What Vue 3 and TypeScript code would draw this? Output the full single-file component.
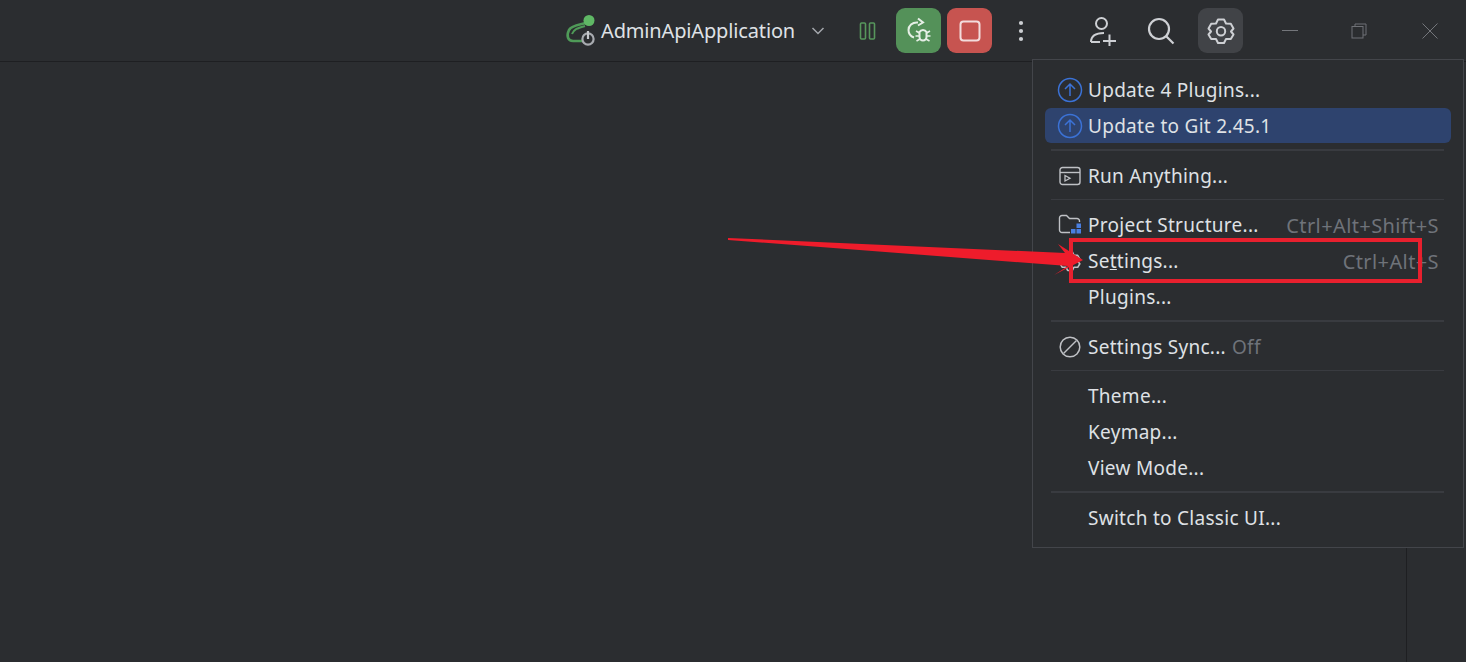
<script setup lang="ts">
interface Row { kind: 'item' | 'sep'; label?: string; icon?: string; hint?: string; suffix?: string; active?: boolean; strong?: boolean; tight?: boolean }
const rows: Row[] = [
  { kind: 'item', label: 'Update 4 Plugins...', icon: 'up' },
  { kind: 'item', label: 'Update to Git 2.45.1', icon: 'up', active: true },
  { kind: 'sep', strong: true },
  { kind: 'item', label: 'Run Anything...', icon: 'run' },
  { kind: 'sep', tight: true },
  { kind: 'item', label: 'Project Structure...', icon: 'folder', hint: 'Ctrl+Alt+Shift+S' },
  { kind: 'item', label: 'settings', icon: 'gear', hint: 'Ctrl+Alt+S' },
  { kind: 'item', label: 'Plugins...' },
  { kind: 'sep', strong: true },
  { kind: 'item', label: 'Settings Sync...', icon: 'off', suffix: 'Off' },
  { kind: 'sep', tight: true },
  { kind: 'item', label: 'Theme...' },
  { kind: 'item', label: 'Keymap...' },
  { kind: 'item', label: 'View Mode...' },
  { kind: 'sep', strong: true },
  { kind: 'item', label: 'Switch to Classic UI...' },
]
</script>

<template>
  <div class="ide">
    <header class="bar">
      <svg class="spring" width="32" height="32" viewBox="0 0 32 32" fill="none">
        <path d="M21 8 C14 10 7 10 4 15 C1 21 3 26 8 26 L17 26" stroke="#4f9a58" stroke-width="2.6" />
        <path d="M20 11 C13 13 9 14 7 19" stroke="#4f9a58" stroke-width="2" />
        <circle cx="24" cy="5.500" r="5.500" fill="#5fb865" />
        <circle cx="23" cy="24" r="5.600" stroke="#a8abb0" stroke-width="2.200" />
        <path d="M23 16 V24" stroke="#c5c7cc" stroke-width="2.200" />
      </svg>
      <span class="run-name">AdminApiApplication</span>
      <svg class="chev" width="14" height="10" viewBox="0 0 14 10" fill="none">
        <path d="M1.500 2 L7 7.500 L12.500 2" stroke="#a4a7ac" stroke-width="1.500" />
      </svg>
      <svg class="pause" width="18" height="18" viewBox="0 0 18 18" fill="none">
        <rect x="1.500" y="1" width="5" height="16" rx="1" stroke="#57965c" stroke-width="1.600" />
        <rect x="10.500" y="1" width="5" height="16" rx="1" stroke="#57965c" stroke-width="1.600" />
      </svg>
      <div class="btn green">
        <svg width="28" height="28" viewBox="0 0 28 28" fill="none">
          <path d="M13 5.500 C7 5 3.500 9 3.500 13 C3.500 17 6 19.500 9 20.500" stroke="#e6efe6" stroke-width="2" />
          <path d="M13 1.500 L18 5.500 L13 8.500" stroke="#e6efe6" stroke-width="2" />
          <path d="M14.500 15 a4 4 0 0 1 7 0 v5 a3.500 3.500 0 0 1 -7 0 z" stroke="#e6efe6" stroke-width="2" />
          <path d="M11 14 L14.500 16 M25 14 L21.500 16 M10.500 19 H14.500 M25.500 19 H21.500 M11.500 24 L15 22 M24.500 24 L21 22" stroke="#e6efe6" stroke-width="1.600" />
        </svg>
      </div>
      <div class="btn red">
        <svg width="24" height="24" viewBox="0 0 24 24" fill="none">
          <rect x="2.500" y="2.500" width="19" height="19" rx="3" stroke="#f3dcdc" stroke-width="2" />
        </svg>
      </div>
      <svg class="dots" width="6" height="22" viewBox="0 0 6 22">
        <circle cx="3" cy="3" r="2.100" fill="#ccced2" />
        <circle cx="3" cy="11" r="2.100" fill="#ccced2" />
        <circle cx="3" cy="19" r="2.100" fill="#ccced2" />
      </svg>
      <svg class="adduser" width="28" height="30" viewBox="0 0 28 30" fill="none">
        <circle cx="12.500" cy="7.500" r="5.500" stroke="#ced0d4" stroke-width="2" />
        <path d="M2 26 C2 20 7 17 15 17 M2 26 H11" stroke="#ced0d4" stroke-width="2" />
        <path d="M14 25 H27 M20.500 18.500 V30" stroke="#ced0d4" stroke-width="2" />
      </svg>
      <svg class="search" width="28" height="28" viewBox="0 0 28 28" fill="none">
        <circle cx="12" cy="12" r="10" stroke="#ced0d4" stroke-width="2.200" />
        <path d="M19 19 L26.500 26.500" stroke="#ced0d4" stroke-width="2.200" />
      </svg>
      <div class="btn gearbox">
        <svg width="28" height="28" viewBox="0 0 28 28" fill="none">
          <path d="M11 2.500 H17 L19 6.500 L23.800 6.800 L26.500 11.500 L24 14.500 L26.500 17.500 L23.800 22 L19 22 L17 26 H11 L9 22 L4.200 22 L1.500 17.500 L4 14.500 L1.500 11.500 L4.200 6.800 L9 6.500 Z" stroke="#ced0d4" stroke-width="2" stroke-linejoin="round" />
          <circle cx="14" cy="14.300" r="4.200" stroke="#ced0d4" stroke-width="2" />
        </svg>
      </div>
      <div class="win">
        <svg class="w-min" width="16" height="2" viewBox="0 0 16 2"><rect width="16" height="1" fill="#74767b" /></svg>
        <svg class="w-max" width="16" height="16" viewBox="0 0 16 16" fill="none">
          <rect x="1" y="3.500" width="11" height="11.500" stroke="#6f7176" />
          <path d="M4 3.500 V1 H15 V12 H12" stroke="#6f7176" />
        </svg>
        <svg class="w-close" width="16" height="16" viewBox="0 0 16 16" fill="none">
          <path d="M0.500 0.500 L15.500 15.500 M15.500 0.500 L0.500 15.500" stroke="#74767b" />
        </svg>
      </div>
    </header>
    <main class="body">
      <div class="editor"></div>
      <aside class="strip"></aside>
    </main>

    <div class="menu">
      <template v-for="(row, i) in rows" :key="i">
        <div v-if="row.kind === 'sep'" class="sep" :class="{ strong: row.strong, tight: row.tight }"></div>
        <div v-else class="row" :class="{ active: row.active }">
          <span class="ico">
            <svg v-if="row.icon === 'up'" width="26" height="26" viewBox="0 0 26 26" fill="none">
              <circle cx="13" cy="13" r="11.500" stroke="#3b72d6" stroke-width="1.500" />
              <path d="M13 19 V7.500 M8 12 L13 7 L18 12" stroke="#3b72d6" stroke-width="1.500" />
            </svg>
            <svg v-else-if="row.icon === 'run'" width="22" height="20" viewBox="0 0 22 20" fill="none">
              <rect x="1" y="1.500" width="20" height="17" rx="2.500" stroke="#bfc1c5" stroke-width="1.400" />
              <path d="M1 6.500 H21" stroke="#bfc1c5" stroke-width="1.400" />
              <path d="M6 9.500 L11 12.200 L6 15 Z" stroke="#bfc1c5" stroke-width="1.300" />
            </svg>
            <svg v-else-if="row.icon === 'folder'" width="24" height="22" viewBox="0 0 24 22" fill="none">
              <path d="M12 18.500 H4 A2.500 2.500 0 0 1 1.500 16 V4 A2.500 2.500 0 0 1 4 1.500 H8.500 L11.500 4.500 H19 A2.500 2.500 0 0 1 21.500 7 V8" stroke="#bfc1c5" stroke-width="1.400" />
              <rect x="13" y="15" width="4.500" height="4.500" fill="#4a7fe0" />
              <rect x="18.500" y="15" width="4.500" height="4.500" fill="#4a7fe0" />
              <rect x="18.500" y="9.500" width="4.500" height="4.500" fill="#4a7fe0" />
            </svg>
            <svg v-else-if="row.icon === 'gear'" width="22" height="22" viewBox="0 0 28 28" fill="none">
              <path d="M11 2.500 H17 L19 6.500 L23.800 6.800 L26.500 11.500 L24 14.500 L26.500 17.500 L23.800 22 L19 22 L17 26 H11 L9 22 L4.200 22 L1.500 17.500 L4 14.500 L1.500 11.500 L4.200 6.800 L9 6.500 Z" stroke="#bfc1c5" stroke-width="2" stroke-linejoin="round" />
            </svg>
            <svg v-else-if="row.icon === 'off'" width="22" height="22" viewBox="0 0 22 22" fill="none">
              <circle cx="11" cy="11" r="9.800" stroke="#bfc1c5" stroke-width="1.500" />
              <path d="M4.500 17.500 L17.500 4.500" stroke="#bfc1c5" stroke-width="1.500" />
            </svg>
          </span>
          <span v-if="row.label === 'settings'" class="label">Se<u>t</u>tings...</span>
          <span v-else class="label">{{ row.label }}</span>
          <span v-if="row.suffix" class="suffix">{{ row.suffix }}</span>
          <span v-if="row.hint" class="hint">{{ row.hint }}</span>
        </div>
      </template>
    </div>

    <div class="callout"></div>
    <svg class="arrow" width="368" height="50" viewBox="0 0 368 50">
      <path d="M6 7 L6 9 L346 35 L332 44 L361 29 L336 13 L343 22 Z" fill="#ee1c2b" />
    </svg>
  </div>
</template>

<style>
html, body { margin: 0; background: #2b2d30; }
</style>

<style scoped>
.ide {
  position: relative;
  width: 1466px;
  height: 662px;
  overflow: hidden;
  background: #2b2d30;
  display: flex;
  flex-direction: column;
  font-family: "Noto Sans", "Open Sans", sans-serif;
  color: #dfe1e5;
}
.bar {
  height: 62px;
  flex: none;
  box-sizing: border-box;
  border-bottom: 1px solid #1e1f22;
  display: flex;
  align-items: center;
  padding-left: 565px;
}
.spring { margin-right: 4px; }
.run-name { font-size: 20px; width: 196px; white-space: nowrap; color: #dfe1e5; letter-spacing: -0.15px; }
.chev { margin-left: 14px; }
.pause { margin-left: 34px; }
.btn {
  width: 45px;
  height: 45px;
  border-radius: 9px;
  display: flex;
  align-items: center;
  justify-content: center;
  flex: none;
}
.green { background: #549159; margin-left: 19px; }
.red { background: #c75450; margin-left: 6px; }
.dots { margin-left: 26px; }
.adduser { margin-left: 65px; }
.search { margin-left: 30px; }
.gearbox { background: #414347; margin-left: 23px; }
.win { display: flex; align-items: center; margin-left: 39px; }
.w-max { margin-left: 53px; }
.w-close { margin-left: 55px; }
.body { flex: 1; display: flex; }
.editor { flex: 1; }
.strip { width: 59px; border-left: 1px solid #1e1f22; }
.menu {
  position: absolute;
  left: 1032px;
  top: 59px;
  width: 432px;
  box-sizing: border-box;
  padding: 12px 12px 11px 12px;
  background: #2b2d30;
  border: 1px solid #43454a;
}
.row {
  height: 36px;
  box-sizing: border-box;
  display: flex;
  align-items: center;
  border-radius: 6px;
  font-size: 19px;
  letter-spacing: 0.28px;
  padding-right: 12px;
  width: 406px;
  white-space: nowrap;
}
.row.active { background: #2e436e; height: 35px; margin-bottom: 1px; }
.ico {
  width: 43px;
  flex: none;
  display: flex;
  justify-content: center;
  padding-left: 6px;
  box-sizing: border-box;
}
.label { color: #dfe1e5; }
.suffix { color: #6f737a; margin-left: 6px; }
.hint { margin-left: auto; color: #6f737a; font-size: 20px; letter-spacing: 0.4px; }
.sep { height: 14px; display: flex; align-items: center; width: 393px; margin-left: 6px; }
.sep.tight { height: 13px; }
.sep::before { content: ""; flex: 1; height: 1px; background: #393b40; margin-top: -2px; }
.sep.strong::before { height: 2px; }
.callout {
  position: absolute;
  left: 1069px;
  top: 238px;
  width: 353px;
  height: 45px;
  box-sizing: border-box;
  border: 4px solid #e8202e;
}
.arrow { position: absolute; left: 722px; top: 231px; }
</style>
